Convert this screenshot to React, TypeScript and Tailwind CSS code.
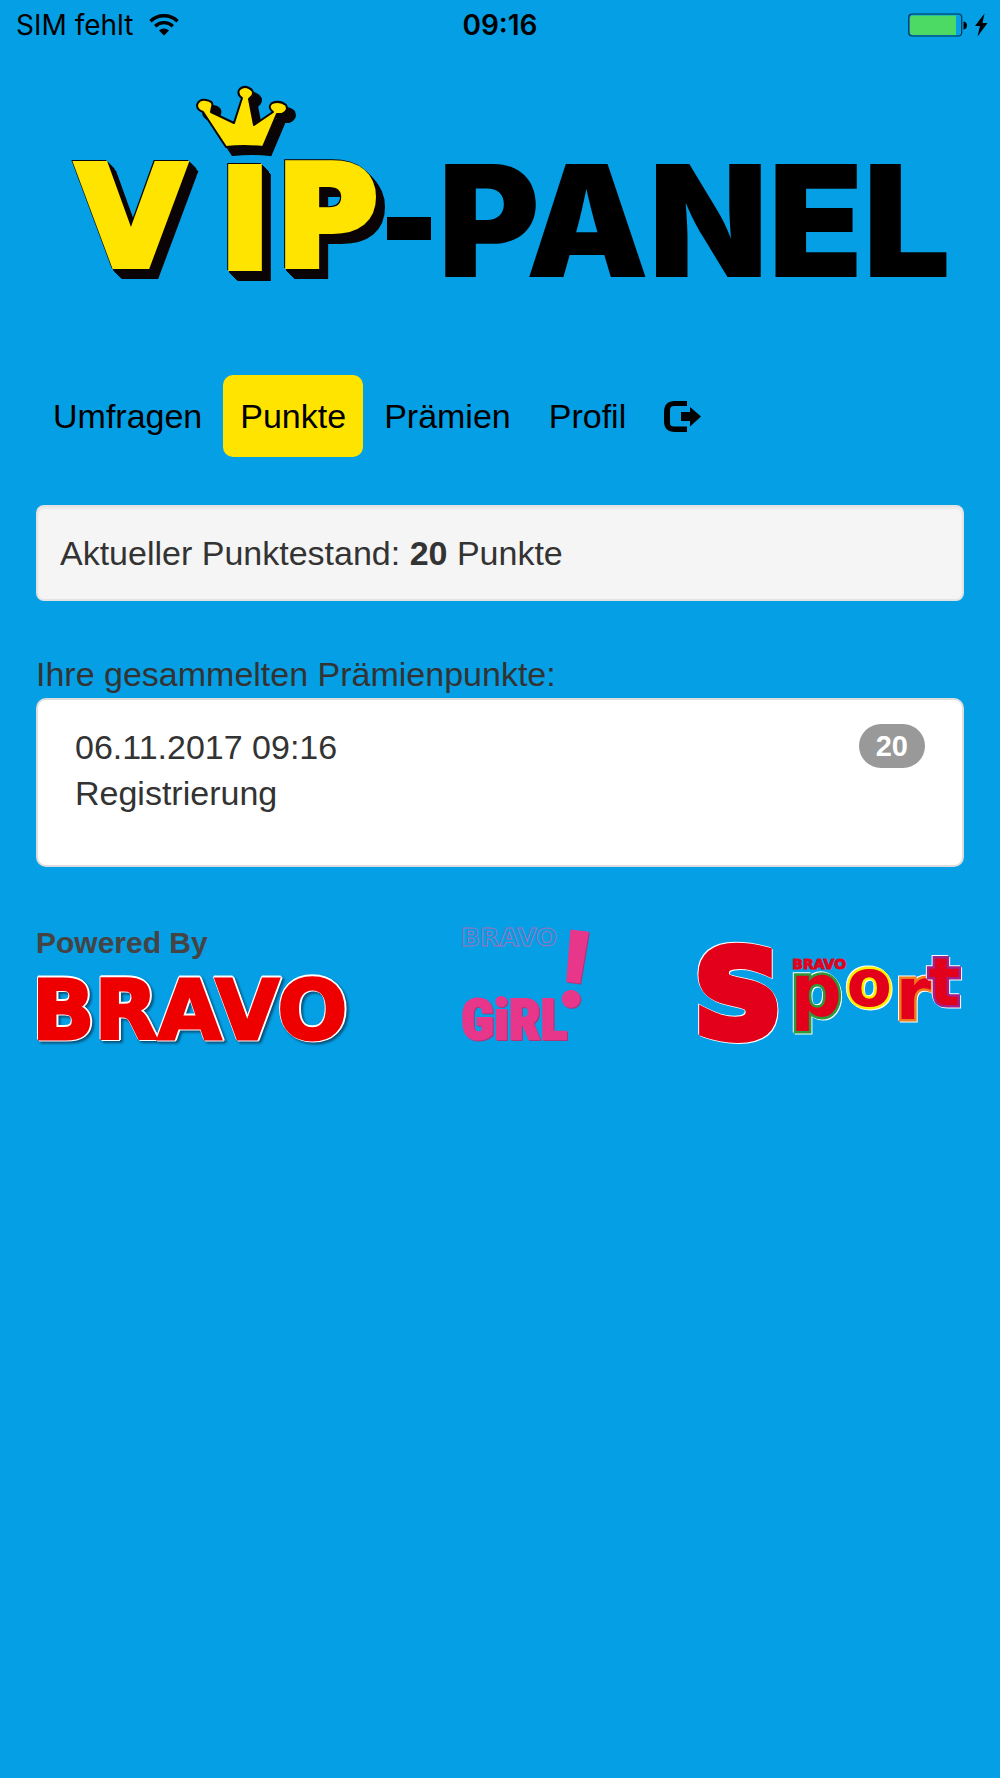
import React from "react";

function WifiIcon() {
  return (
    <svg viewBox="0 0 30 22" className="h-[22px] w-[30px]" aria-label="WLAN">
      <g fill="none" stroke="#000" strokeWidth="3.4">
        <path d="M1.5 7.2A19.5 19.5 0 0 1 28.5 7.2" />
        <path d="M6.2 12.2A12.7 12.7 0 0 1 23.8 12.2" />
      </g>
      <path d="M15 21.5 10 16.6A7.2 7.2 0 0 1 20 16.6Z" />
    </svg>
  );
}

function BatteryIcon() {
  return (
    <svg viewBox="0 0 80 24" className="h-6 w-20" aria-label="Batterie lädt">
      <rect x="0.7" y="1" width="53" height="22" rx="3.5" fill="none" stroke="#03364d" strokeWidth="1.2" />
      <path d="M5 2.500H48V22H5Q2 22 2 19V5.500Q2 2.500 5 2.500Z" fill="#4cd964" />
      <path d="M55.500 8.500Q59 9 59 12.500T55.500 16.500Z" />
      <path d="M76.500 0.500 67 13H72L69.500 23.500 79.500 10H74.500Z" />
    </svg>
  );
}

function LogoutIcon() {
  return (
    <svg viewBox="0 0 37 31" className="h-[31px] w-[37px]" aria-hidden="true">
      <path d="M23 0V5H10Q6 5 6 9V22Q6 25.500 10 25.500H23V31H11Q0 31 0 20V11Q0 0 11 0Z" />
      <path d="M17 11H26V6L37 15.500 26 25.500V20H17Z" />
    </svg>
  );
}

const vipLetters = [
  { char: "V", x: 131, y: 265, size: 138 },
  { char: "I", x: 245, y: 267, size: 136 },
  { char: "P", x: 327, y: 265, size: 138 },
];

const crown =
  "M226 147 203 112Q197 110 197 105Q199 99 206 100Q214 101 212 107L211 112 234 123 242 98Q237 95 239 90Q243 85 249 88Q255 91 252 96L249 99 254 125 273 112Q267 107 272 103Q280 100 286 105Q289 111 282 114L277 114 263 147Q244 145 226 147Z";

function VipPanelLogo() {
  return (
    <svg viewBox="36 80 928 210" className="block w-full overflow-visible" role="img" aria-label="VIP-Panel">
      <path d={crown} transform="translate(7 7)" stroke="#0b0406" strokeWidth="4" fill="#0b0406" />
      <path d={crown} fill="#ffe400" stroke="#0b0406" strokeWidth="2" strokeLinejoin="round" />
      <g
        fontFamily="DejaVu Sans"
        fontWeight="700"
        textAnchor="middle"
        fill="#ffe400"
        stroke="#ffe400"
        strokeWidth="8"
        className="[filter:drop-shadow(1px_1px_0_#0b0406)_drop-shadow(-1px_-1px_0_#0b0406)_drop-shadow(2px_2px_0_#0b0406)_drop-shadow(2px_3px_0_#0b0406)_drop-shadow(4px_4px_0_#0b0406)]"
      >
        {vipLetters.map((l) => (
          <text key={l.char} x={l.x} y={l.y} fontSize={l.size}>
            {l.char}
          </text>
        ))}
      </g>
      <rect x="387" y="217" width="44" height="23" />
      <text x="438" y="277" fontFamily="Inter" fontWeight="900" fontSize="155">
        PANEL
      </text>
    </svg>
  );
}

function BravoLogo() {
  return (
    <svg viewBox="0 0 334 64" className="block w-full overflow-visible" role="img" aria-label="Bravo">
      <text
        x="-4"
        y="61"
        fontFamily="DejaVu Sans"
        fontWeight="700"
        fontSize="82"
        fill="#ee0000"
        stroke="#ee0000"
        strokeWidth="3"
        className="[filter:drop-shadow(1px_1px_0_#fff)_drop-shadow(-1px_-1px_0_#fff)_drop-shadow(1px_-1px_0_#fff)_drop-shadow(2px_2px_1px_rgba(10,50,80,0.7))]"
      >
        BRAVO
      </text>
    </svg>
  );
}

function GirlLogo() {
  return (
    <svg viewBox="458 926 130 117" className="block w-full overflow-visible" role="img" aria-label="Bravo Girl!">
      <text x="456" y="947" fontFamily="DejaVu Sans" fontWeight="700" fontSize="25" fill="none" stroke="#a070bc" strokeWidth="1">
        BRAVO
      </text>
      <g
        fontFamily="'Roboto Condensed', Roboto"
        fontWeight="900"
        fill="#e8368a"
        className="[filter:drop-shadow(1px_1px_0_#a8367c)]"
      >
        <text x="456" y="1040" fontSize="56" stroke="#e8368a" strokeWidth="2">
          GiRL
        </text>
        <text x="555" y="1008" fontSize="108" transform="rotate(7 569 970)">
          !
        </text>
      </g>
    </svg>
  );
}

const sportLetters = [
  { char: "S", x: 739, y: 1037, size: 120, outline: "#e2001a", weight: 10 },
  { char: "p", x: 817, y: 1017, size: 72, outline: "#2a9a3c", weight: 5 },
  { char: "o", x: 870, y: 1007, size: 66, outline: "#fff000", weight: 5 },
  { char: "r", x: 914, y: 1020, size: 72, outline: "#f07c1c", weight: 5 },
  { char: "t", x: 945, y: 1006, size: 66, outline: "#a0208c", weight: 5 },
];

function SportLogo() {
  return (
    <svg viewBox="687 940 278 103" className="block w-full overflow-visible" role="img" aria-label="Bravo Sport">
      <g fontFamily="DejaVu Sans" fontWeight="700" textAnchor="middle" fill="#e2001a">
        {sportLetters.map((l) => (
          <text
            key={l.char}
            x={l.x}
            y={l.y}
            fontSize={l.size}
            stroke={l.outline}
            strokeWidth={l.weight}
            paintOrder="stroke"
            className="[filter:drop-shadow(1px_1px_0_#fff)_drop-shadow(-1px_-1px_0_#fff)]"
          >
            {l.char}
          </text>
        ))}
        <text x="820" y="970" fontSize="14" stroke="#e2001a" strokeWidth="1">
          BRAVO
        </text>
      </g>
    </svg>
  );
}

const navItems = ["Umfragen", "Punkte", "Prämien", "Profil"];

export default function App() {
  return (
    <div className="min-h-screen bg-[#049fe4] font-['Liberation_Sans',Arial,sans-serif] text-[34px] leading-[46px] text-[#333]">
      <header className="grid h-[50px] grid-cols-3 items-center px-3 font-['Inter',sans-serif] text-[28px] leading-8 text-black">
        <div className="flex items-center gap-4 pl-1">
          <span>SIM fehlt</span>
          <WifiIcon />
        </div>
        <time className="text-center font-semibold">09:16</time>
        <div className="flex justify-end">
          <BatteryIcon />
        </div>
      </header>

      <main className="px-9 pt-[30px]">
        <VipPanelLogo />

        <nav className="mt-[85px] flex gap-1 text-black">
          {navItems.map((item) => (
            <a
              key={item}
              href="#"
              aria-current={item === "Punkte" ? "page" : undefined}
              className={`rounded-[10px] px-[17px] py-[18px] ${item === "Punkte" ? "bg-[#ffe400]" : ""}`}
            >
              {item}
            </a>
          ))}
          <a href="#" aria-label="Abmelden" className="flex items-center px-[17px]">
            <LogoutIcon />
          </a>
        </nav>

        <section className="mt-12 rounded-lg border-2 border-[#e3e3e3] bg-[#f5f5f5] px-[22px] py-[23px] shadow-[inset_0_2px_2px_rgba(0,0,0,0.05)]">
          Aktueller Punktestand: <strong>20</strong> Punkte
        </section>

        <h2 className="mt-[50px]">Ihre gesammelten Prämienpunkte:</h2>
        <ul className="mt-px">
          <li className="flex items-start justify-between rounded-[10px] border-2 border-[#ddd] bg-white px-[37px] pt-6 pb-[49px]">
            <div>
              <p>06.11.2017 09:16</p>
              <p>Registrierung</p>
            </div>
            <span className="rounded-full bg-[#999] px-[17px] text-[29px] leading-[44px] font-bold text-white">20</span>
          </li>
        </ul>

        <footer className="mt-[57px] flex items-end justify-between">
          <div className="w-[36%]">
            <p className="mb-4 text-[30px] leading-[38px] font-bold text-[#444]">Powered By</p>
            <BravoLogo />
          </div>
          <div className="w-[14%]">
            <GirlLogo />
          </div>
          <div className="w-[30%]">
            <SportLogo />
          </div>
        </footer>
      </main>
    </div>
  );
}
